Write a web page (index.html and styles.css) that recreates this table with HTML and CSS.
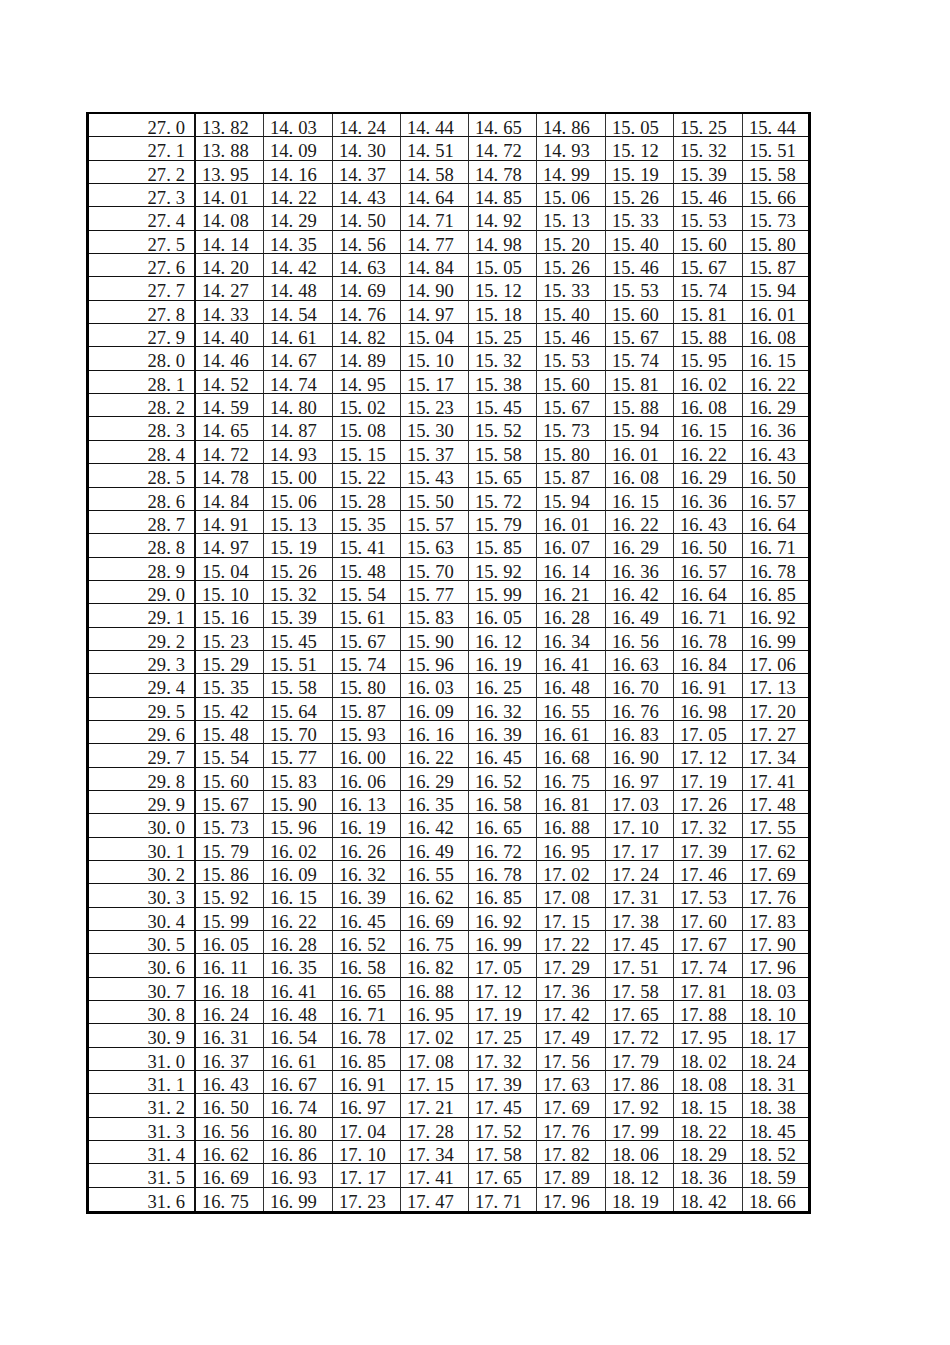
FILE: index.html
```html
<!DOCTYPE html>
<html>
<head>
<meta charset="utf-8">
<link rel="stylesheet" href="styles.css">
</head>
<body>
<table class="sheet">
<colgroup>
<col class="c-key"><col class="c-a"><col class="c-b"><col class="c-a"><col class="c-a"><col class="c-a"><col class="c-b"><col class="c-a"><col class="c-b"><col class="c-last">
</colgroup>
<tbody>
<tr><td>27<span class="p">.</span>0</td><td>13<span class="p">.</span>82</td><td>14<span class="p">.</span>03</td><td>14<span class="p">.</span>24</td><td>14<span class="p">.</span>44</td><td>14<span class="p">.</span>65</td><td>14<span class="p">.</span>86</td><td>15<span class="p">.</span>05</td><td>15<span class="p">.</span>25</td><td>15<span class="p">.</span>44</td></tr>
<tr><td>27<span class="p">.</span>1</td><td>13<span class="p">.</span>88</td><td>14<span class="p">.</span>09</td><td>14<span class="p">.</span>30</td><td>14<span class="p">.</span>51</td><td>14<span class="p">.</span>72</td><td>14<span class="p">.</span>93</td><td>15<span class="p">.</span>12</td><td>15<span class="p">.</span>32</td><td>15<span class="p">.</span>51</td></tr>
<tr><td>27<span class="p">.</span>2</td><td>13<span class="p">.</span>95</td><td>14<span class="p">.</span>16</td><td>14<span class="p">.</span>37</td><td>14<span class="p">.</span>58</td><td>14<span class="p">.</span>78</td><td>14<span class="p">.</span>99</td><td>15<span class="p">.</span>19</td><td>15<span class="p">.</span>39</td><td>15<span class="p">.</span>58</td></tr>
<tr><td>27<span class="p">.</span>3</td><td>14<span class="p">.</span>01</td><td>14<span class="p">.</span>22</td><td>14<span class="p">.</span>43</td><td>14<span class="p">.</span>64</td><td>14<span class="p">.</span>85</td><td>15<span class="p">.</span>06</td><td>15<span class="p">.</span>26</td><td>15<span class="p">.</span>46</td><td>15<span class="p">.</span>66</td></tr>
<tr><td>27<span class="p">.</span>4</td><td>14<span class="p">.</span>08</td><td>14<span class="p">.</span>29</td><td>14<span class="p">.</span>50</td><td>14<span class="p">.</span>71</td><td>14<span class="p">.</span>92</td><td>15<span class="p">.</span>13</td><td>15<span class="p">.</span>33</td><td>15<span class="p">.</span>53</td><td>15<span class="p">.</span>73</td></tr>
<tr><td>27<span class="p">.</span>5</td><td>14<span class="p">.</span>14</td><td>14<span class="p">.</span>35</td><td>14<span class="p">.</span>56</td><td>14<span class="p">.</span>77</td><td>14<span class="p">.</span>98</td><td>15<span class="p">.</span>20</td><td>15<span class="p">.</span>40</td><td>15<span class="p">.</span>60</td><td>15<span class="p">.</span>80</td></tr>
<tr><td>27<span class="p">.</span>6</td><td>14<span class="p">.</span>20</td><td>14<span class="p">.</span>42</td><td>14<span class="p">.</span>63</td><td>14<span class="p">.</span>84</td><td>15<span class="p">.</span>05</td><td>15<span class="p">.</span>26</td><td>15<span class="p">.</span>46</td><td>15<span class="p">.</span>67</td><td>15<span class="p">.</span>87</td></tr>
<tr><td>27<span class="p">.</span>7</td><td>14<span class="p">.</span>27</td><td>14<span class="p">.</span>48</td><td>14<span class="p">.</span>69</td><td>14<span class="p">.</span>90</td><td>15<span class="p">.</span>12</td><td>15<span class="p">.</span>33</td><td>15<span class="p">.</span>53</td><td>15<span class="p">.</span>74</td><td>15<span class="p">.</span>94</td></tr>
<tr><td>27<span class="p">.</span>8</td><td>14<span class="p">.</span>33</td><td>14<span class="p">.</span>54</td><td>14<span class="p">.</span>76</td><td>14<span class="p">.</span>97</td><td>15<span class="p">.</span>18</td><td>15<span class="p">.</span>40</td><td>15<span class="p">.</span>60</td><td>15<span class="p">.</span>81</td><td>16<span class="p">.</span>01</td></tr>
<tr><td>27<span class="p">.</span>9</td><td>14<span class="p">.</span>40</td><td>14<span class="p">.</span>61</td><td>14<span class="p">.</span>82</td><td>15<span class="p">.</span>04</td><td>15<span class="p">.</span>25</td><td>15<span class="p">.</span>46</td><td>15<span class="p">.</span>67</td><td>15<span class="p">.</span>88</td><td>16<span class="p">.</span>08</td></tr>
<tr><td>28<span class="p">.</span>0</td><td>14<span class="p">.</span>46</td><td>14<span class="p">.</span>67</td><td>14<span class="p">.</span>89</td><td>15<span class="p">.</span>10</td><td>15<span class="p">.</span>32</td><td>15<span class="p">.</span>53</td><td>15<span class="p">.</span>74</td><td>15<span class="p">.</span>95</td><td>16<span class="p">.</span>15</td></tr>
<tr><td>28<span class="p">.</span>1</td><td>14<span class="p">.</span>52</td><td>14<span class="p">.</span>74</td><td>14<span class="p">.</span>95</td><td>15<span class="p">.</span>17</td><td>15<span class="p">.</span>38</td><td>15<span class="p">.</span>60</td><td>15<span class="p">.</span>81</td><td>16<span class="p">.</span>02</td><td>16<span class="p">.</span>22</td></tr>
<tr><td>28<span class="p">.</span>2</td><td>14<span class="p">.</span>59</td><td>14<span class="p">.</span>80</td><td>15<span class="p">.</span>02</td><td>15<span class="p">.</span>23</td><td>15<span class="p">.</span>45</td><td>15<span class="p">.</span>67</td><td>15<span class="p">.</span>88</td><td>16<span class="p">.</span>08</td><td>16<span class="p">.</span>29</td></tr>
<tr><td>28<span class="p">.</span>3</td><td>14<span class="p">.</span>65</td><td>14<span class="p">.</span>87</td><td>15<span class="p">.</span>08</td><td>15<span class="p">.</span>30</td><td>15<span class="p">.</span>52</td><td>15<span class="p">.</span>73</td><td>15<span class="p">.</span>94</td><td>16<span class="p">.</span>15</td><td>16<span class="p">.</span>36</td></tr>
<tr><td>28<span class="p">.</span>4</td><td>14<span class="p">.</span>72</td><td>14<span class="p">.</span>93</td><td>15<span class="p">.</span>15</td><td>15<span class="p">.</span>37</td><td>15<span class="p">.</span>58</td><td>15<span class="p">.</span>80</td><td>16<span class="p">.</span>01</td><td>16<span class="p">.</span>22</td><td>16<span class="p">.</span>43</td></tr>
<tr><td>28<span class="p">.</span>5</td><td>14<span class="p">.</span>78</td><td>15<span class="p">.</span>00</td><td>15<span class="p">.</span>22</td><td>15<span class="p">.</span>43</td><td>15<span class="p">.</span>65</td><td>15<span class="p">.</span>87</td><td>16<span class="p">.</span>08</td><td>16<span class="p">.</span>29</td><td>16<span class="p">.</span>50</td></tr>
<tr><td>28<span class="p">.</span>6</td><td>14<span class="p">.</span>84</td><td>15<span class="p">.</span>06</td><td>15<span class="p">.</span>28</td><td>15<span class="p">.</span>50</td><td>15<span class="p">.</span>72</td><td>15<span class="p">.</span>94</td><td>16<span class="p">.</span>15</td><td>16<span class="p">.</span>36</td><td>16<span class="p">.</span>57</td></tr>
<tr><td>28<span class="p">.</span>7</td><td>14<span class="p">.</span>91</td><td>15<span class="p">.</span>13</td><td>15<span class="p">.</span>35</td><td>15<span class="p">.</span>57</td><td>15<span class="p">.</span>79</td><td>16<span class="p">.</span>01</td><td>16<span class="p">.</span>22</td><td>16<span class="p">.</span>43</td><td>16<span class="p">.</span>64</td></tr>
<tr><td>28<span class="p">.</span>8</td><td>14<span class="p">.</span>97</td><td>15<span class="p">.</span>19</td><td>15<span class="p">.</span>41</td><td>15<span class="p">.</span>63</td><td>15<span class="p">.</span>85</td><td>16<span class="p">.</span>07</td><td>16<span class="p">.</span>29</td><td>16<span class="p">.</span>50</td><td>16<span class="p">.</span>71</td></tr>
<tr><td>28<span class="p">.</span>9</td><td>15<span class="p">.</span>04</td><td>15<span class="p">.</span>26</td><td>15<span class="p">.</span>48</td><td>15<span class="p">.</span>70</td><td>15<span class="p">.</span>92</td><td>16<span class="p">.</span>14</td><td>16<span class="p">.</span>36</td><td>16<span class="p">.</span>57</td><td>16<span class="p">.</span>78</td></tr>
<tr><td>29<span class="p">.</span>0</td><td>15<span class="p">.</span>10</td><td>15<span class="p">.</span>32</td><td>15<span class="p">.</span>54</td><td>15<span class="p">.</span>77</td><td>15<span class="p">.</span>99</td><td>16<span class="p">.</span>21</td><td>16<span class="p">.</span>42</td><td>16<span class="p">.</span>64</td><td>16<span class="p">.</span>85</td></tr>
<tr><td>29<span class="p">.</span>1</td><td>15<span class="p">.</span>16</td><td>15<span class="p">.</span>39</td><td>15<span class="p">.</span>61</td><td>15<span class="p">.</span>83</td><td>16<span class="p">.</span>05</td><td>16<span class="p">.</span>28</td><td>16<span class="p">.</span>49</td><td>16<span class="p">.</span>71</td><td>16<span class="p">.</span>92</td></tr>
<tr><td>29<span class="p">.</span>2</td><td>15<span class="p">.</span>23</td><td>15<span class="p">.</span>45</td><td>15<span class="p">.</span>67</td><td>15<span class="p">.</span>90</td><td>16<span class="p">.</span>12</td><td>16<span class="p">.</span>34</td><td>16<span class="p">.</span>56</td><td>16<span class="p">.</span>78</td><td>16<span class="p">.</span>99</td></tr>
<tr><td>29<span class="p">.</span>3</td><td>15<span class="p">.</span>29</td><td>15<span class="p">.</span>51</td><td>15<span class="p">.</span>74</td><td>15<span class="p">.</span>96</td><td>16<span class="p">.</span>19</td><td>16<span class="p">.</span>41</td><td>16<span class="p">.</span>63</td><td>16<span class="p">.</span>84</td><td>17<span class="p">.</span>06</td></tr>
<tr><td>29<span class="p">.</span>4</td><td>15<span class="p">.</span>35</td><td>15<span class="p">.</span>58</td><td>15<span class="p">.</span>80</td><td>16<span class="p">.</span>03</td><td>16<span class="p">.</span>25</td><td>16<span class="p">.</span>48</td><td>16<span class="p">.</span>70</td><td>16<span class="p">.</span>91</td><td>17<span class="p">.</span>13</td></tr>
<tr><td>29<span class="p">.</span>5</td><td>15<span class="p">.</span>42</td><td>15<span class="p">.</span>64</td><td>15<span class="p">.</span>87</td><td>16<span class="p">.</span>09</td><td>16<span class="p">.</span>32</td><td>16<span class="p">.</span>55</td><td>16<span class="p">.</span>76</td><td>16<span class="p">.</span>98</td><td>17<span class="p">.</span>20</td></tr>
<tr><td>29<span class="p">.</span>6</td><td>15<span class="p">.</span>48</td><td>15<span class="p">.</span>70</td><td>15<span class="p">.</span>93</td><td>16<span class="p">.</span>16</td><td>16<span class="p">.</span>39</td><td>16<span class="p">.</span>61</td><td>16<span class="p">.</span>83</td><td>17<span class="p">.</span>05</td><td>17<span class="p">.</span>27</td></tr>
<tr><td>29<span class="p">.</span>7</td><td>15<span class="p">.</span>54</td><td>15<span class="p">.</span>77</td><td>16<span class="p">.</span>00</td><td>16<span class="p">.</span>22</td><td>16<span class="p">.</span>45</td><td>16<span class="p">.</span>68</td><td>16<span class="p">.</span>90</td><td>17<span class="p">.</span>12</td><td>17<span class="p">.</span>34</td></tr>
<tr><td>29<span class="p">.</span>8</td><td>15<span class="p">.</span>60</td><td>15<span class="p">.</span>83</td><td>16<span class="p">.</span>06</td><td>16<span class="p">.</span>29</td><td>16<span class="p">.</span>52</td><td>16<span class="p">.</span>75</td><td>16<span class="p">.</span>97</td><td>17<span class="p">.</span>19</td><td>17<span class="p">.</span>41</td></tr>
<tr><td>29<span class="p">.</span>9</td><td>15<span class="p">.</span>67</td><td>15<span class="p">.</span>90</td><td>16<span class="p">.</span>13</td><td>16<span class="p">.</span>35</td><td>16<span class="p">.</span>58</td><td>16<span class="p">.</span>81</td><td>17<span class="p">.</span>03</td><td>17<span class="p">.</span>26</td><td>17<span class="p">.</span>48</td></tr>
<tr><td>30<span class="p">.</span>0</td><td>15<span class="p">.</span>73</td><td>15<span class="p">.</span>96</td><td>16<span class="p">.</span>19</td><td>16<span class="p">.</span>42</td><td>16<span class="p">.</span>65</td><td>16<span class="p">.</span>88</td><td>17<span class="p">.</span>10</td><td>17<span class="p">.</span>32</td><td>17<span class="p">.</span>55</td></tr>
<tr><td>30<span class="p">.</span>1</td><td>15<span class="p">.</span>79</td><td>16<span class="p">.</span>02</td><td>16<span class="p">.</span>26</td><td>16<span class="p">.</span>49</td><td>16<span class="p">.</span>72</td><td>16<span class="p">.</span>95</td><td>17<span class="p">.</span>17</td><td>17<span class="p">.</span>39</td><td>17<span class="p">.</span>62</td></tr>
<tr><td>30<span class="p">.</span>2</td><td>15<span class="p">.</span>86</td><td>16<span class="p">.</span>09</td><td>16<span class="p">.</span>32</td><td>16<span class="p">.</span>55</td><td>16<span class="p">.</span>78</td><td>17<span class="p">.</span>02</td><td>17<span class="p">.</span>24</td><td>17<span class="p">.</span>46</td><td>17<span class="p">.</span>69</td></tr>
<tr><td>30<span class="p">.</span>3</td><td>15<span class="p">.</span>92</td><td>16<span class="p">.</span>15</td><td>16<span class="p">.</span>39</td><td>16<span class="p">.</span>62</td><td>16<span class="p">.</span>85</td><td>17<span class="p">.</span>08</td><td>17<span class="p">.</span>31</td><td>17<span class="p">.</span>53</td><td>17<span class="p">.</span>76</td></tr>
<tr><td>30<span class="p">.</span>4</td><td>15<span class="p">.</span>99</td><td>16<span class="p">.</span>22</td><td>16<span class="p">.</span>45</td><td>16<span class="p">.</span>69</td><td>16<span class="p">.</span>92</td><td>17<span class="p">.</span>15</td><td>17<span class="p">.</span>38</td><td>17<span class="p">.</span>60</td><td>17<span class="p">.</span>83</td></tr>
<tr><td>30<span class="p">.</span>5</td><td>16<span class="p">.</span>05</td><td>16<span class="p">.</span>28</td><td>16<span class="p">.</span>52</td><td>16<span class="p">.</span>75</td><td>16<span class="p">.</span>99</td><td>17<span class="p">.</span>22</td><td>17<span class="p">.</span>45</td><td>17<span class="p">.</span>67</td><td>17<span class="p">.</span>90</td></tr>
<tr><td>30<span class="p">.</span>6</td><td>16<span class="p">.</span>11</td><td>16<span class="p">.</span>35</td><td>16<span class="p">.</span>58</td><td>16<span class="p">.</span>82</td><td>17<span class="p">.</span>05</td><td>17<span class="p">.</span>29</td><td>17<span class="p">.</span>51</td><td>17<span class="p">.</span>74</td><td>17<span class="p">.</span>96</td></tr>
<tr><td>30<span class="p">.</span>7</td><td>16<span class="p">.</span>18</td><td>16<span class="p">.</span>41</td><td>16<span class="p">.</span>65</td><td>16<span class="p">.</span>88</td><td>17<span class="p">.</span>12</td><td>17<span class="p">.</span>36</td><td>17<span class="p">.</span>58</td><td>17<span class="p">.</span>81</td><td>18<span class="p">.</span>03</td></tr>
<tr><td>30<span class="p">.</span>8</td><td>16<span class="p">.</span>24</td><td>16<span class="p">.</span>48</td><td>16<span class="p">.</span>71</td><td>16<span class="p">.</span>95</td><td>17<span class="p">.</span>19</td><td>17<span class="p">.</span>42</td><td>17<span class="p">.</span>65</td><td>17<span class="p">.</span>88</td><td>18<span class="p">.</span>10</td></tr>
<tr><td>30<span class="p">.</span>9</td><td>16<span class="p">.</span>31</td><td>16<span class="p">.</span>54</td><td>16<span class="p">.</span>78</td><td>17<span class="p">.</span>02</td><td>17<span class="p">.</span>25</td><td>17<span class="p">.</span>49</td><td>17<span class="p">.</span>72</td><td>17<span class="p">.</span>95</td><td>18<span class="p">.</span>17</td></tr>
<tr><td>31<span class="p">.</span>0</td><td>16<span class="p">.</span>37</td><td>16<span class="p">.</span>61</td><td>16<span class="p">.</span>85</td><td>17<span class="p">.</span>08</td><td>17<span class="p">.</span>32</td><td>17<span class="p">.</span>56</td><td>17<span class="p">.</span>79</td><td>18<span class="p">.</span>02</td><td>18<span class="p">.</span>24</td></tr>
<tr><td>31<span class="p">.</span>1</td><td>16<span class="p">.</span>43</td><td>16<span class="p">.</span>67</td><td>16<span class="p">.</span>91</td><td>17<span class="p">.</span>15</td><td>17<span class="p">.</span>39</td><td>17<span class="p">.</span>63</td><td>17<span class="p">.</span>86</td><td>18<span class="p">.</span>08</td><td>18<span class="p">.</span>31</td></tr>
<tr><td>31<span class="p">.</span>2</td><td>16<span class="p">.</span>50</td><td>16<span class="p">.</span>74</td><td>16<span class="p">.</span>97</td><td>17<span class="p">.</span>21</td><td>17<span class="p">.</span>45</td><td>17<span class="p">.</span>69</td><td>17<span class="p">.</span>92</td><td>18<span class="p">.</span>15</td><td>18<span class="p">.</span>38</td></tr>
<tr><td>31<span class="p">.</span>3</td><td>16<span class="p">.</span>56</td><td>16<span class="p">.</span>80</td><td>17<span class="p">.</span>04</td><td>17<span class="p">.</span>28</td><td>17<span class="p">.</span>52</td><td>17<span class="p">.</span>76</td><td>17<span class="p">.</span>99</td><td>18<span class="p">.</span>22</td><td>18<span class="p">.</span>45</td></tr>
<tr><td>31<span class="p">.</span>4</td><td>16<span class="p">.</span>62</td><td>16<span class="p">.</span>86</td><td>17<span class="p">.</span>10</td><td>17<span class="p">.</span>34</td><td>17<span class="p">.</span>58</td><td>17<span class="p">.</span>82</td><td>18<span class="p">.</span>06</td><td>18<span class="p">.</span>29</td><td>18<span class="p">.</span>52</td></tr>
<tr><td>31<span class="p">.</span>5</td><td>16<span class="p">.</span>69</td><td>16<span class="p">.</span>93</td><td>17<span class="p">.</span>17</td><td>17<span class="p">.</span>41</td><td>17<span class="p">.</span>65</td><td>17<span class="p">.</span>89</td><td>18<span class="p">.</span>12</td><td>18<span class="p">.</span>36</td><td>18<span class="p">.</span>59</td></tr>
<tr><td>31<span class="p">.</span>6</td><td>16<span class="p">.</span>75</td><td>16<span class="p">.</span>99</td><td>17<span class="p">.</span>23</td><td>17<span class="p">.</span>47</td><td>17<span class="p">.</span>71</td><td>17<span class="p">.</span>96</td><td>18<span class="p">.</span>19</td><td>18<span class="p">.</span>42</td><td>18<span class="p">.</span>66</td></tr>
</tbody>
</table>
</body>
</html>
```
FILE: styles.css
```css
html, body {
  margin: 0;
  padding: 0;
  background: #ffffff;
}

body {
  font-family: "Liberation Serif", "Times New Roman", serif;
  color: #1a1a1a;
}

.sheet {
  margin: 112px 0 0 86px;
  width: 725px;
  table-layout: fixed;
  border-collapse: separate;
  border-spacing: 0;
  border-top: 2px solid #000;
  border-left: 3px solid #000;
  border-right: 3px solid #000;
  border-bottom: 3px solid #000;
}

.c-key { width: 107px; }
.c-a { width: 68px; }
.c-b { width: 69px; }
.c-last { width: 65px; }

.sheet tr {
  height: 23.35px;
}

.sheet td {
  box-sizing: border-box;
  padding: 5px 0 0 6px;
  height: 23.35px;
  line-height: 17px;
  vertical-align: top;
  font-size: 18.6px;
  letter-spacing: 0;
  white-space: nowrap;
  border-right: 1px solid #333;
  border-bottom: 1px solid #111;
  text-align: left;
}

.sheet td:first-child {
  text-align: right;
  padding: 5px 9px 0 0;
  border-right: 2px solid #111;
}

.sheet td:last-child {
  border-right: none;
}

.sheet tr:last-child td {
  border-bottom: none;
}

.p {
  letter-spacing: 4.9px;
}
```
